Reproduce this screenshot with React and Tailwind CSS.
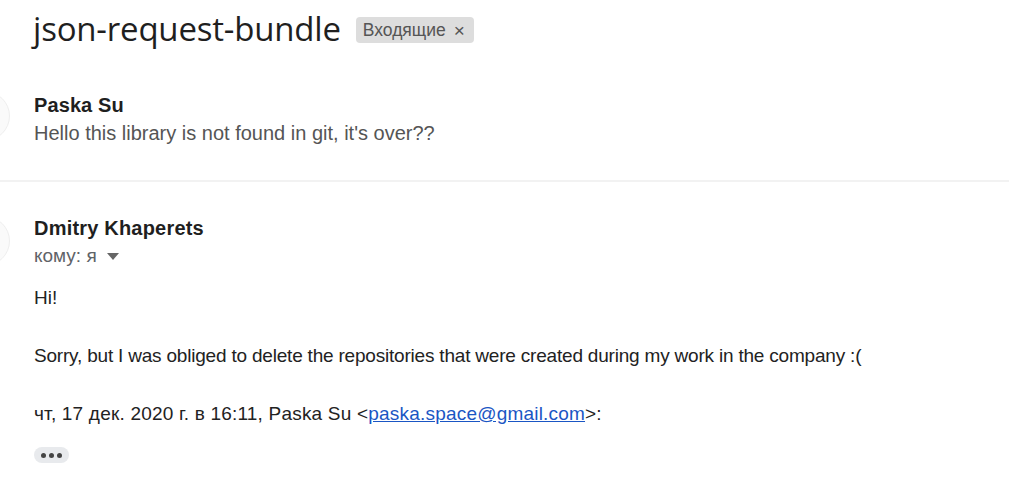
export default function App() {
  return (
    <div className="w-[1009px] h-[504px] bg-white overflow-hidden relative" style={{ fontFamily: '"Liberation Sans", Arial, sans-serif' }}>
      <div className="flex items-center gap-[15px] pl-[33px] pt-[9px] h-[40px] box-content">
        <h1 className="text-[33px] leading-[40px] text-[#1f1f1f] font-normal tracking-[-0.2px]" style={{ fontFamily: '"Open Sans", "Noto Sans", sans-serif' }}>
          json-request-bundle
        </h1>
        <span className="flex items-center gap-[8px] bg-[#dddddd] rounded-[4px] pl-[7px] pr-[9px] h-[26px] text-[17.5px] text-[#555] mt-[2px]">
          Входящие
          <span className="text-[19px] leading-none text-[#555]">×</span>
        </span>
      </div>

      <div className="relative mt-[44px] pl-[34px]">
        <div className="absolute left-[-40px] top-[-2px] w-[50px] h-[50px] rounded-full border border-[#eeeeee] bg-[#fafafa]" />
        <div className="text-[20px] leading-[24px] font-bold text-[#1f1f1f] tracking-[0.1px]">Paska Su</div>
        <div className="text-[20px] leading-[32px] text-[#555]">Hello this library is not found in git, it's over??</div>
      </div>

      <div className="mt-[31px] h-[2px] bg-[#f2f2f2]" />

      <div className="relative mt-[34px] pl-[34px]">
        <div className="absolute left-[-40px] top-[0px] w-[50px] h-[50px] rounded-full border border-[#eeeeee] bg-[#fafafa]" />
        <div className="text-[20px] leading-[24px] font-bold text-[#1f1f1f] tracking-[0.2px]">Dmitry Khaperets</div>
        <div className="flex items-center gap-[10px] text-[19px] leading-[32px] text-[#5f6368]">
          кому: я
          <svg width="12" height="7" viewBox="0 0 12 7"><path d="M0 0h12L6 7z" fill="#666" /></svg>
        </div>
        <div className="mt-[11px] text-[19px] leading-[29px] text-[#222]">
          <p>Hi!</p>
          <p className="h-[29px]"></p>
          <p className="tracking-[-0.2px]">Sorry, but I was obliged to delete the repositories that were created during my work in the company :(</p>
          <p className="h-[29px]"></p>
          <p className="tracking-[0.2px]">
            чт, 17 дек. 2020 г. в 16:11, Paska Su &lt;<a className="text-[#1a56c4] underline">paska.space@gmail.com</a>&gt;:
          </p>
        </div>
        <div className="mt-[19px] w-[35px] h-[16px] rounded-full bg-[#e8eaed] flex items-center justify-center gap-[3px]">
          <span className="w-[5px] h-[5px] rounded-full bg-[#444]" />
          <span className="w-[5px] h-[5px] rounded-full bg-[#444]" />
          <span className="w-[5px] h-[5px] rounded-full bg-[#444]" />
        </div>
      </div>
    </div>
  );
}
